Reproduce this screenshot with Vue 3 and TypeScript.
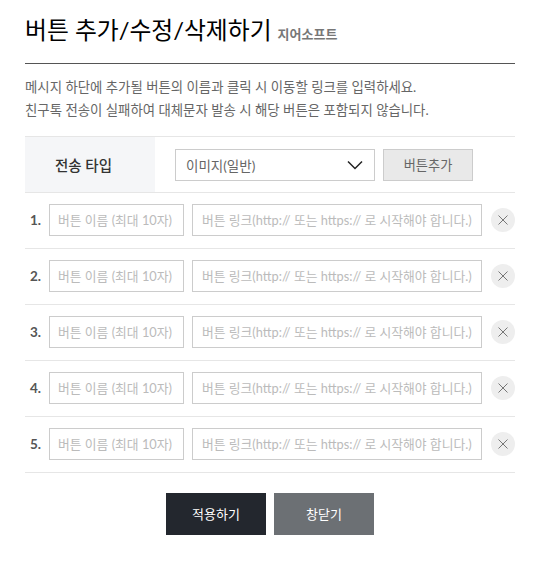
<script setup lang="ts">
const rows: number[] = [1, 2, 3, 4, 5]
</script>

<template>
  <div class="page">
    <header class="head">
      <h1 class="title">버튼 추가/수정/삭제하기</h1>
      <small class="brand">지어소프트</small>
    </header>
    <p class="desc">메시지 하단에 추가될 버튼의 이름과 클릭 시 이동할 링크를 입력하세요.<br />친구톡 전송이 실패하여 대체문자 발송 시 해당 버튼은 포함되지 않습니다.</p>
    <div class="type-row">
      <div class="type-label">전송 타입</div>
      <div class="type-ctl">
        <div class="select">
          <span>이미지(일반)</span>
          <svg width="16" height="10" viewBox="0 0 16 10"><path d="M1 1.500 8 8.500 15 1.500" fill="none" stroke="#222" stroke-width="1.500" /></svg>
        </div>
        <button class="add" type="button">버튼추가</button>
      </div>
    </div>
    <div v-for="n in rows" :key="n" class="row">
      <span class="num">{{ n }}.</span>
      <input class="field name" placeholder="버튼 이름 (최대 10자)" />
      <input class="field link" placeholder="버튼 링크(http:// 또는 https:// 로 시작해야 합니다.)" />
      <button class="del" type="button" aria-label="삭제">
        <svg width="10" height="10" viewBox="0 0 10 10"><path d="M.5.5 9.500 9.500M9.500.5.5 9.500" fill="none" stroke="#777" stroke-width="1" /></svg>
      </button>
    </div>
    <div class="actions">
      <button class="act dark" type="button">적용하기</button>
      <button class="act gray" type="button">창닫기</button>
    </div>
  </div>
</template>

<style scoped>
.page {
  width: 535px;
  height: 564px;
  box-sizing: border-box;
  padding: 0 20px 0 25px;
  font-family: "Lato", "Noto Sans CJK KR", sans-serif;
  color: #555;
  background: #fff;
  overflow: hidden;
}
.head {
  box-sizing: border-box;
  padding-top: 12px;
  border-bottom: 1px solid #555;
  display: flex;
  align-items: baseline;
  gap: 6px;
  height: 64px;
}
.title {
  margin: 0;
  font-size: 23.8px;
  font-weight: 400;
  line-height: 36px;
  color: #000;
}
.brand {
  font-size: 13px;
  font-weight: 700;
  color: #777;
}
.desc {
  margin: 12px 0 14px;
  font-size: 13.4px;
  line-height: 23px;
  color: #666;
}
.type-row {
  display: flex;
  height: 57px;
  box-sizing: border-box;
  border-top: 1px solid #e6e6e6;
  border-bottom: 1px solid #e6e6e6;
}
.type-label {
  width: 130px;
  box-sizing: border-box;
  padding-left: 30px;
  background: #f5f6f8;
  display: flex;
  align-items: center;
  font-size: 14.5px;
  font-weight: 500;
  color: #333;
}
.type-ctl {
  display: flex;
  align-items: center;
  gap: 8px;
  padding-left: 20px;
}
.select {
  width: 200px;
  height: 32px;
  box-sizing: border-box;
  border: 1px solid #ccc;
  padding: 0 11px 0 10px;
  display: flex;
  align-items: center;
  justify-content: space-between;
  font-size: 13.5px;
  color: #666;
}
.add {
  width: 90px;
  height: 32px;
  border: 1px solid #ccc;
  background: #e9e9e9;
  font-family: inherit;
  font-size: 13.2px;
  color: #666;
  padding: 0;
}
.row {
  display: flex;
  align-items: center;
  height: 56px;
  box-sizing: border-box;
  padding-bottom: 1px;
  border-bottom: 1px solid #e6e6e6;
}
.num {
  width: 24px;
  box-sizing: border-box;
  padding-left: 5px;
  font-size: 13.5px;
  font-weight: 700;
  color: #555;
}
.field {
  height: 32px;
  box-sizing: border-box;
  border: 1px solid #ccc;
  border-radius: 0;
  padding: 0 9px;
  font-family: inherit;
  font-size: 12.8px;
  color: #333;
  outline: none;
}
.field::placeholder {
  color: #bbb;
  opacity: 1;
}
.name {
  width: 135px;
  padding: 0 8px;
}
.link {
  width: 290px;
  margin-left: 8px;
}
.del {
  width: 24px;
  height: 24px;
  margin-left: 9px;
  padding: 0;
  border: 0;
  border-radius: 50%;
  background: #eee;
  display: flex;
  align-items: center;
  justify-content: center;
}
.actions {
  display: flex;
  justify-content: center;
  gap: 8px;
  padding-top: 20px;
}
.act {
  width: 100px;
  height: 42px;
  border: 0;
  padding: 0 0 2px;
  font-family: inherit;
  font-size: 13px;
  color: #fff;
}
.dark {
  background: #23272e;
}
.gray {
  background: #6c7074;
}
</style>
